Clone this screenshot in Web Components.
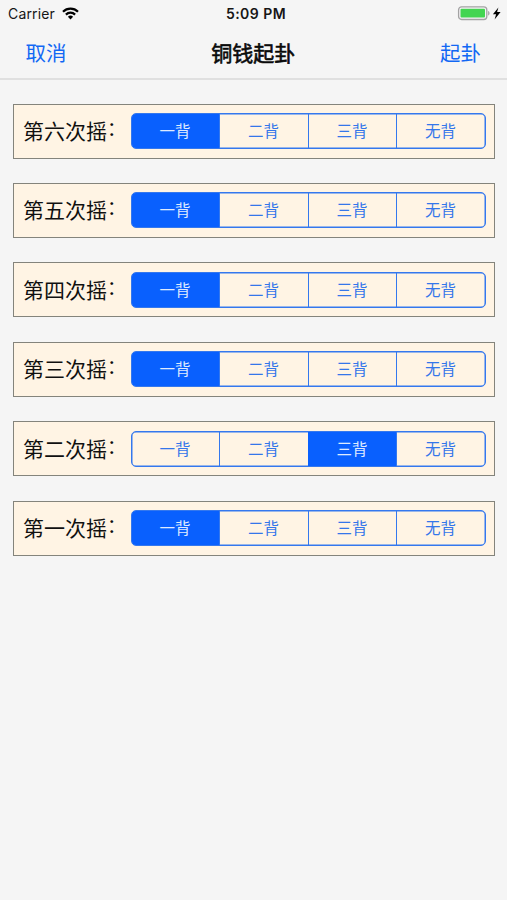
<!DOCTYPE html>
<html lang="zh-CN">
<head>
<meta charset="utf-8">
<meta name="viewport" content="width=device-width, initial-scale=1">
<title>铜钱起卦</title>
<style>
    body {
        margin: 0;
        background: #f5f5f5;
        font-family: Inter, "Noto Sans CJK SC", sans-serif;
    }
</style>
</head>
<body>
<coin-app></coin-app>

<script>
class StatusBar extends HTMLElement {
    constructor() {
        super();
        this.attachShadow({ mode: 'open' }).innerHTML = `
            <style>
                :host {
                    display: grid;
                    grid-template-columns: 1fr auto 1fr;
                    align-items: center;
                    height: 27px;
                    padding: 0 6px 0 8px;
                    font-size: 14px;
                    color: #161616;
                }
                .left, .right {
                    display: flex;
                    align-items: center;
                }
                .left { gap: 7px; }
                .right { justify-content: flex-end; }
                .carrier { letter-spacing: 0.15px; }
                .time {
                    font-weight: 600;
                    letter-spacing: 0.45px;
                    padding-left: 3px;
                }
                svg { display: block; }
            </style>
            <div class="left">
                <span class="carrier">Carrier</span>
                <svg width="17" height="13" viewBox="0 0 17 13">
                    <g fill="none" stroke="#000" stroke-width="2.2">
                        <path d="M1 4.7a10.6 10.6 0 0 1 15 0"/>
                        <path d="M3.9 7.6a6.5 6.5 0 0 1 9.2 0"/>
                    </g>
                    <path d="M5.9 9.7a3.7 3.7 0 0 1 5.2 0L8.5 12.4z"/>
                </svg>
            </div>
            <span class="time"><slot></slot></span>
            <div class="right">
                <svg width="44" height="15" viewBox="0 0 44 15">
                    <rect x="1.6" y="0.9" width="28.2" height="12.6" rx="3" fill="#f8f4f8" stroke="#a3a3a3" stroke-width="1.3"/>
                    <rect x="3.5" y="2.8" width="24.5" height="8.8" rx="1" fill="#43d551"/>
                    <path d="M31.3 5c1.5.4 1.5 4.1 0 4.5z" fill="#8c8c8c"/>
                    <path d="M41.4 1.4L35.9 8.3h3.2l-1.5 5.1 6-7.4h-3.5z"/>
                </svg>
            </div>
        `;
    }
}

class NavBar extends HTMLElement {
    constructor() {
        super();
        this.attachShadow({ mode: 'open' }).innerHTML = `
            <style>
                :host {
                    box-sizing: border-box;
                    display: grid;
                    grid-template-columns: 1fr auto 1fr;
                    align-items: center;
                    height: 53px;
                    padding: 3px 26px 0 25.5px;
                    border-bottom: 2px solid #e0e0e0;
                    font-size: 20.5px;
                    line-height: 30px;
                    color: #1268f4;
                }
                .title {
                    font-size: 21px;
                    color: #0a0a0a;
                    -webkit-text-stroke: 0.6px #0a0a0a;
                }
                .right { text-align: right; }
            </style>
            <span><slot name="left"></slot></span>
            <span class="title"><slot></slot></span>
            <span class="right"><slot name="right"></slot></span>
        `;
    }
}

class SegmentControl extends HTMLElement {
    constructor() {
        super();
        this.attachShadow({ mode: 'open' }).innerHTML = `
            <style>
                :host {
                    display: block;
                    --tint: #0960fe;
                    --line: #3478ee;
                }
                .segments {
                    box-sizing: border-box;
                    display: grid;
                    grid-template-columns: 87px 89px 88px 1fr;
                    height: 36px;
                    border: 1px solid var(--line);
                    border-radius: 5px;
                    overflow: hidden;
                    box-shadow: inset 0 0 0 0.5px var(--line);
                }
                button {
                    margin: 0;
                    padding: 2px 1px 0 0;
                    border: 0;
                    border-left: 1px solid var(--line);
                    background: none;
                    font: inherit;
                    font-size: 15.5px;
                    line-height: 32px;
                    color: #3476ea;
                }
                button:first-child { border-left: 0; }
                button.on {
                    background: var(--tint);
                    border-color: var(--tint);
                    color: #dfeaff;
                }
            </style>
            <div class="segments"></div>
        `;
        this.shadowRoot.querySelector('.segments').addEventListener('click', (e) => {
            const index = e.target.dataset.index;
            if (index !== undefined) this.select(Number(index));
        });
    }

    connectedCallback() {
        const items = this.getAttribute('items').split(',');
        this.shadowRoot.querySelector('.segments').innerHTML = items
            .map((item, i) => `<button type="button" data-index="${i}">${item}</button>`)
            .join('');
        this.select(Number(this.getAttribute('selected')));
    }

    select(index) {
        this.shadowRoot.querySelectorAll('button').forEach((button, i) => {
            button.classList.toggle('on', i === index);
        });
    }
}

class ThrowRow extends HTMLElement {
    constructor() {
        super();
        this.attachShadow({ mode: 'open' }).innerHTML = `
            <style>
                :host {
                    box-sizing: border-box;
                    display: grid;
                    grid-template-columns: 108px 1fr;
                    align-items: center;
                    height: 55px;
                    padding: 0 8px 0 9px;
                    border: 1px solid #84847c;
                    background: #fff4e4;
                }
                .label {
                    display: flex;
                    padding-top: 2px;
                    font-size: 21px;
                    line-height: 30px;
                    white-space: nowrap;
                    color: #101010;
                }
                /* the full-width colon sits low, lift it to the middle of the line */
                .colon {
                    margin-top: -2px;
                    font-size: 19px;
                }
            </style>
            <span class="label"><slot></slot><span class="colon">：</span></span>
            <segment-control items="一背,二背,三背,无背" selected="${this.getAttribute('selected') || 0}"></segment-control>
        `;
    }
}

class CoinApp extends HTMLElement {
    constructor() {
        super();
        this.attachShadow({ mode: 'open' }).innerHTML = `
            <style>
                :host {
                    display: block;
                    min-height: 100vh;
                }
                .rows {
                    display: grid;
                    gap: 24.4px;
                    padding: 23.6px 12px 0 13px;
                }
            </style>
            <status-bar>5:09 PM</status-bar>
            <nav-bar><span slot="left">取消</span>铜钱起卦<span slot="right">起卦</span></nav-bar>
            <div class="rows">
                <throw-row>第六次摇</throw-row>
                <throw-row>第五次摇</throw-row>
                <throw-row>第四次摇</throw-row>
                <throw-row>第三次摇</throw-row>
                <throw-row selected="2">第二次摇</throw-row>
                <throw-row>第一次摇</throw-row>
            </div>
        `;
    }
}

customElements.define('status-bar', StatusBar);
customElements.define('nav-bar', NavBar);
customElements.define('segment-control', SegmentControl);
customElements.define('throw-row', ThrowRow);
customElements.define('coin-app', CoinApp);
</script>
</body>
</html>
